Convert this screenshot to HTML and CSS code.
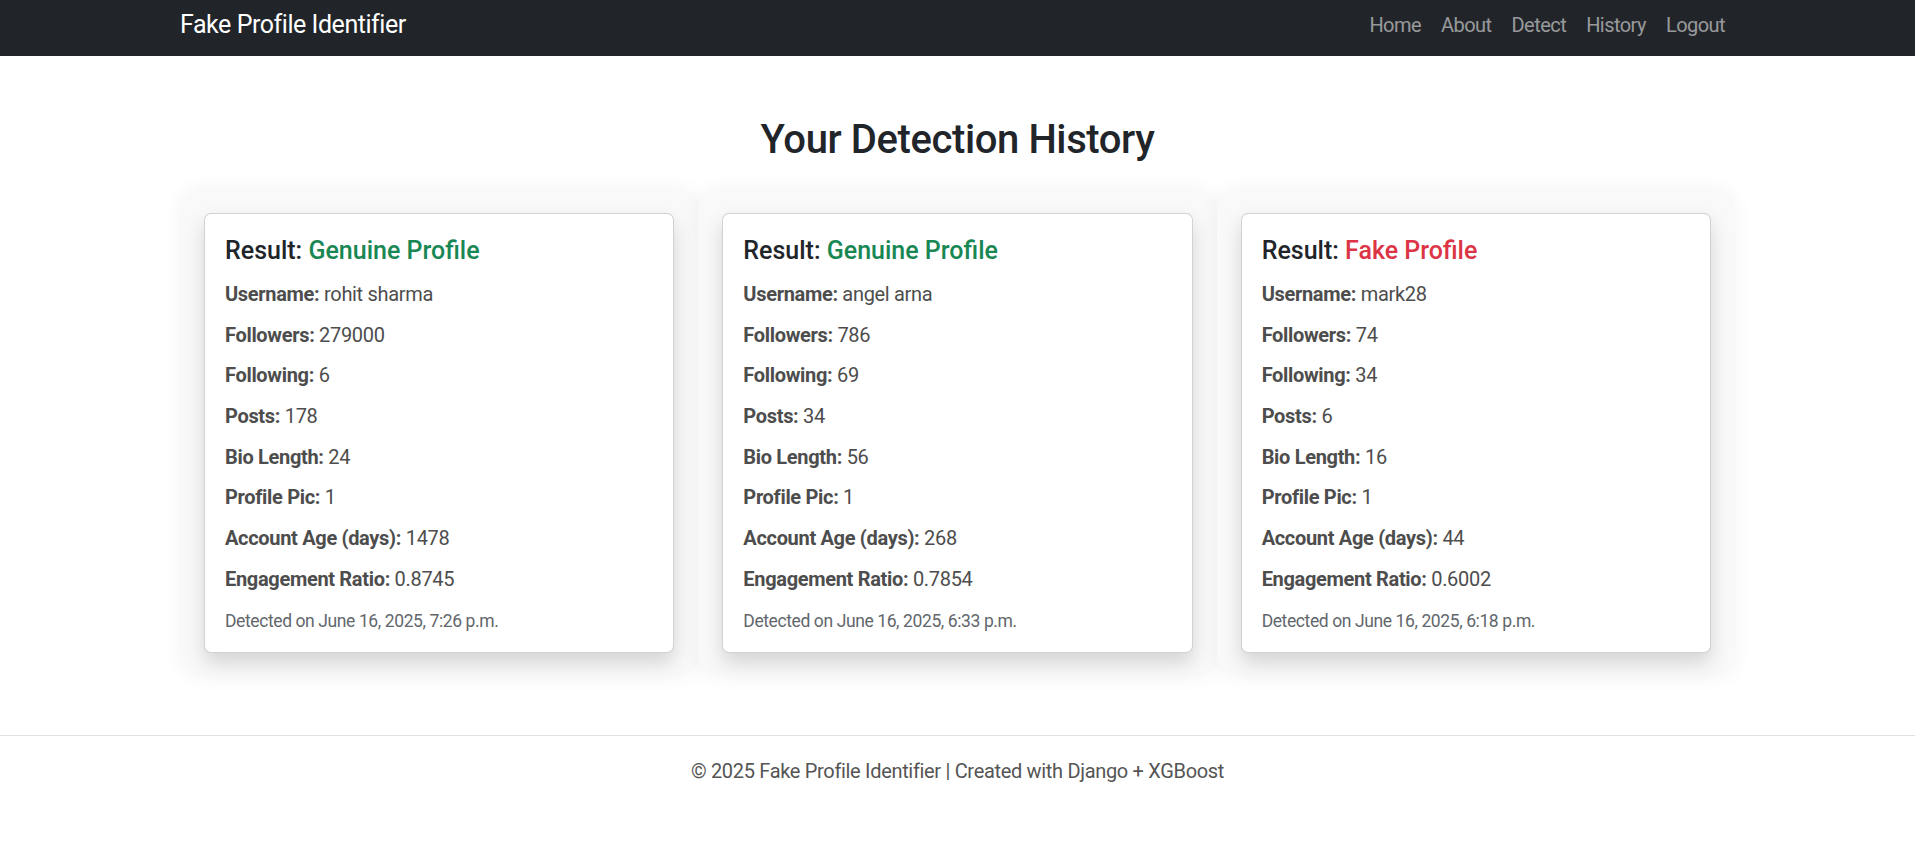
FILE: index.html
```html
<!DOCTYPE html>
<html lang="en">
<head>
<meta charset="utf-8">
<title>Detection History - Fake Profile Identifier</title>
<link rel="stylesheet" href="styles.css">
</head>
<body>
<nav class="navbar">
  <div class="container nav-inner">
    <a class="brand" href="#">Fake Profile Identifier</a>
    <ul class="nav-links">
      <li><a href="#">Home</a></li>
      <li><a href="#">About</a></li>
      <li><a href="#">Detect</a></li>
      <li><a href="#">History</a></li>
      <li><a href="#">Logout</a></li>
    </ul>
  </div>
</nav>

<main class="container main">
  <h2 class="page-title">Your Detection History</h2>
  <div class="history-row">
    <div class="history-col">
      <div class="card">
        <h5 class="card-title">Result: <span class="genuine">Genuine Profile</span></h5>
        <p><strong>Username:</strong> rohit sharma</p>
        <p><strong>Followers:</strong> 279000</p>
        <p><strong>Following:</strong> 6</p>
        <p><strong>Posts:</strong> 178</p>
        <p><strong>Bio Length:</strong> 24</p>
        <p><strong>Profile Pic:</strong> 1</p>
        <p><strong>Account Age (days):</strong> 1478</p>
        <p><strong>Engagement Ratio:</strong> 0.8745</p>
        <p class="detected"><small>Detected on June 16, 2025, 7:26 p.m.</small></p>
      </div>
    </div>
    <div class="history-col">
      <div class="card">
        <h5 class="card-title">Result: <span class="genuine">Genuine Profile</span></h5>
        <p><strong>Username:</strong> angel arna</p>
        <p><strong>Followers:</strong> 786</p>
        <p><strong>Following:</strong> 69</p>
        <p><strong>Posts:</strong> 34</p>
        <p><strong>Bio Length:</strong> 56</p>
        <p><strong>Profile Pic:</strong> 1</p>
        <p><strong>Account Age (days):</strong> 268</p>
        <p><strong>Engagement Ratio:</strong> 0.7854</p>
        <p class="detected"><small>Detected on June 16, 2025, 6:33 p.m.</small></p>
      </div>
    </div>
    <div class="history-col">
      <div class="card">
        <h5 class="card-title">Result: <span class="fake">Fake Profile</span></h5>
        <p><strong>Username:</strong> mark28</p>
        <p><strong>Followers:</strong> 74</p>
        <p><strong>Following:</strong> 34</p>
        <p><strong>Posts:</strong> 6</p>
        <p><strong>Bio Length:</strong> 16</p>
        <p><strong>Profile Pic:</strong> 1</p>
        <p><strong>Account Age (days):</strong> 44</p>
        <p><strong>Engagement Ratio:</strong> 0.6002</p>
        <p class="detected"><small>Detected on June 16, 2025, 6:18 p.m.</small></p>
      </div>
    </div>
  </div>
</main>

<footer class="footer">
  © 2025 Fake Profile Identifier | Created with Django + XGBoost
</footer>
</body>
</html>
```

FILE: styles.css
```css
* {
  box-sizing: border-box;
}

html, body {
  margin: 0;
  padding: 0;
}

body {
  font-family: Roboto, "Liberation Sans", sans-serif;
  font-size: 20px;
  line-height: 30px;
  letter-spacing: -0.32px;
  color: #212529;
  background: #fff;
}

.container {
  width: 1555px;
  margin: 0 auto;
}

/* Navbar */
.navbar {
  background: #212529;
  height: 56px;
}

.nav-inner {
  display: flex;
  justify-content: space-between;
  align-items: flex-start;
  padding-top: 10px;
}

.brand {
  color: #fff;
  text-decoration: none;
  font-size: 25px;
  line-height: 30px;
  letter-spacing: -0.45px;
}

.nav-links {
  list-style: none;
  display: flex;
  margin: 0;
  padding: 0;
}

.nav-links a {
  display: block;
  padding: 0 10px;
  color: rgba(255, 255, 255, 0.55);
  text-decoration: none;
  font-size: 20px;
  line-height: 30px;
  letter-spacing: -0.55px;
}

/* Main */
.main {
  padding-top: 60px;
}

.page-title {
  margin: 0 0 25px;
  text-align: center;
  font-size: 40px;
  line-height: 48px;
  font-weight: 500;
  letter-spacing: -0.4px;
}

.history-row {
  display: grid;
  grid-template-columns: repeat(3, 1fr);
}

.history-col {
  padding: 24px;
  border-radius: 22px;
  background: #f9f9f9;
  box-shadow: 0 0 20px rgba(0, 0, 0, 0.05);
}

.card {
  background: #fff;
  border: 1px solid rgba(0, 0, 0, 0.175);
  border-radius: 7px;
  padding: 22px 20px 16px;
  box-shadow: 0 10px 20px rgba(0, 0, 0, 0.15);
}

.card-title {
  margin: 0 0 13px;
  font-size: 25px;
  line-height: 30px;
  font-weight: 500;
  letter-spacing: 0;
  color: #212529;
}

.genuine {
  color: #198754;
}

.fake {
  color: #dc3545;
}

.card p {
  margin: 0 0 10.7px;
  color: #4d4d4d;
}

.card p strong {
  font-weight: 700;
}

.card p.detected {
  margin: 0;
  color: #62676c;
}

.detected small {
  font-size: 17.5px;
  letter-spacing: -0.4px;
}

/* Footer */
.footer {
  margin-top: 58px;
  border-top: 1px solid #dee2e6;
  padding: 20px 0;
  text-align: center;
  color: #555;
}
```
